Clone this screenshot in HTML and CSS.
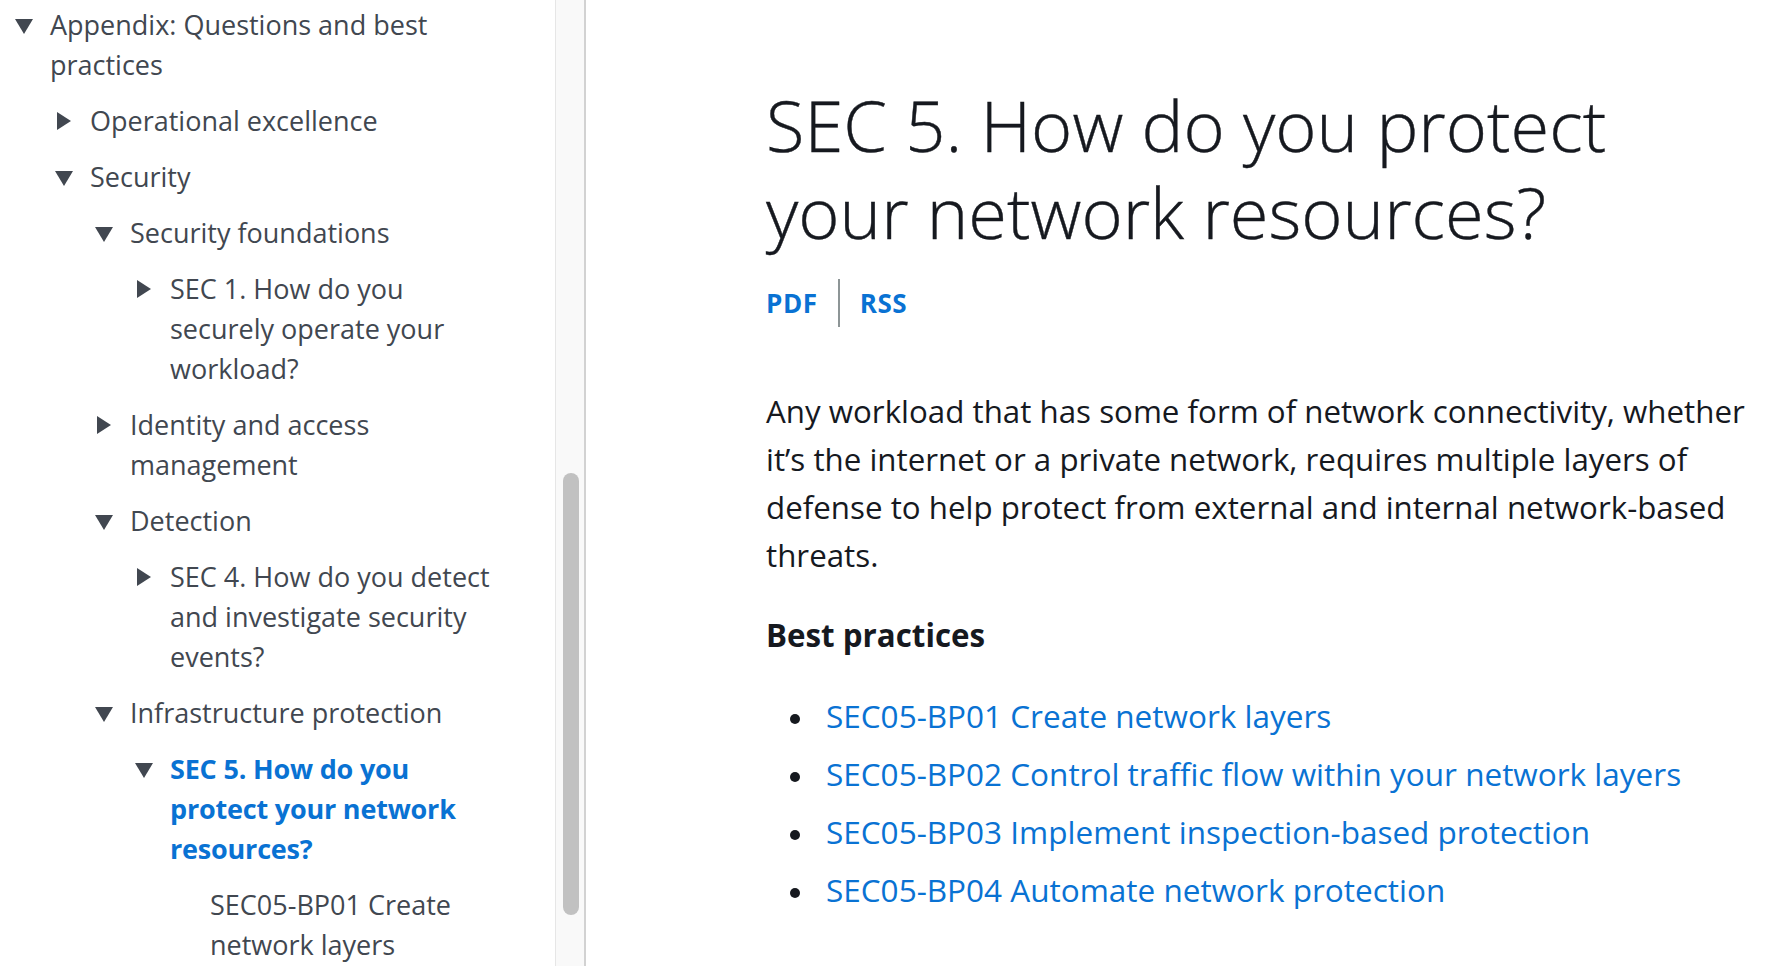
FILE: index.html
```html
<!DOCTYPE html>
<html lang="en">
<head>
<meta charset="utf-8">
<title>SEC 5. How do you protect your network resources?</title>
<link rel="stylesheet" href="styles.css">
</head>
<body>
<div class="layout">
  <nav class="sidebar">
    <div class="nav-scroll">
      <ul class="toc">
        <li class="open">
          <div class="row"><span class="caret down"></span><span class="label">Appendix: Questions and best practices</span></div>
          <ul>
            <li><div class="row"><span class="caret right"></span><span class="label">Operational excellence</span></div></li>
            <li class="open">
              <div class="row"><span class="caret down"></span><span class="label">Security</span></div>
              <ul>
                <li class="open">
                  <div class="row"><span class="caret down"></span><span class="label">Security foundations</span></div>
                  <ul>
                    <li><div class="row"><span class="caret right"></span><span class="label">SEC 1. How do you securely operate your workload?</span></div></li>
                  </ul>
                </li>
                <li><div class="row"><span class="caret right"></span><span class="label">Identity and access management</span></div></li>
                <li class="open">
                  <div class="row"><span class="caret down"></span><span class="label">Detection</span></div>
                  <ul>
                    <li><div class="row"><span class="caret right"></span><span class="label">SEC 4. How do you detect and investigate security events?</span></div></li>
                  </ul>
                </li>
                <li class="open">
                  <div class="row"><span class="caret down"></span><span class="label">Infrastructure protection</span></div>
                  <ul>
                    <li class="open">
                      <div class="row"><span class="caret down"></span><span class="label active">SEC 5. How do you protect your network resources?</span></div>
                      <ul>
                        <li><div class="row"><span class="caret none"></span><span class="label">SEC05-BP01 Create network layers</span></div></li>
                      </ul>
                    </li>
                  </ul>
                </li>
              </ul>
            </li>
          </ul>
        </li>
      </ul>
    </div>
    <div class="scrollbar"><div class="thumb"></div></div>
  </nav>
  <main class="content">
    <h1 class="title">SEC 5. How do you protect your network resources?</h1>
    <div class="doc-links">
      <a class="doc-link" href="#">PDF</a>
      <span class="divider"></span>
      <a class="doc-link" href="#">RSS</a>
    </div>
    <p class="intro">Any workload that has some form of network connectivity, whether it’s the internet or a private network, requires multiple layers of defense to help protect from external and internal network-based threats.</p>
    <h2 class="section-title">Best practices</h2>
    <ul class="bp-list">
      <li><a href="#">SEC05-BP01 Create network layers</a></li>
      <li><a href="#">SEC05-BP02 Control traffic flow within your network layers</a></li>
      <li><a href="#">SEC05-BP03 Implement inspection-based protection</a></li>
      <li><a href="#">SEC05-BP04 Automate network protection</a></li>
    </ul>
  </main>
</div>
</body>
</html>
```

FILE: styles.css
```css
* { box-sizing: border-box; }
html, body { margin: 0; padding: 0; background: #ffffff; }
body {
  font-family: "Open Sans", "Noto Sans", "Liberation Sans", sans-serif;
  color: #16191f;
  height: 966px;
  overflow: hidden;
}
.layout {
  display: flex;
  height: 966px;
}

/* ---------- sidebar ---------- */
.sidebar {
  width: 586px;
  flex: none;
  display: flex;
  height: 966px;
  border-right: 2px solid #d2d2d2;
}
.nav-scroll {
  width: 555px;
  flex: none;
  overflow: hidden;
  padding: 5px 50px 0 15px;
}
.scrollbar {
  flex: 1;
  background: #f9f9f9;
  border-left: 1px solid #e6e6e6;
  padding-top: 473px;
}
.thumb {
  width: 16px;
  height: 442px;
  margin-left: 7px;
  border-radius: 8px;
  background: #c1c1c1;
}
.toc, .toc ul {
  list-style: none;
  margin: 0;
  padding: 0;
}
.toc ul {
  padding-left: 40px;
  margin-top: 16px;
}
.toc li + li { margin-top: 16px; }
.row {
  display: flex;
  align-items: flex-start;
  font-size: 27px;
  line-height: 40px;
  color: #414750;
}
.caret {
  width: 35px;
  height: 40px;
  flex: none;
  position: relative;
}
.caret.down::before {
  content: "";
  position: absolute;
  left: 0;
  top: 14px;
  border-left: 9px solid transparent;
  border-right: 9px solid transparent;
  border-top: 15px solid #414750;
}
.caret.right::before {
  content: "";
  position: absolute;
  left: 2px;
  top: 11px;
  border-top: 9px solid transparent;
  border-bottom: 9px solid transparent;
  border-left: 14px solid #414750;
}
.label { flex: 1; }
.label.active {
  color: #0972d3;
  font-weight: 700;
  letter-spacing: -0.2px;
}

/* ---------- main content ---------- */
.content {
  flex: 1;
  padding: 82px 20px 0 180px;
  min-width: 0;
}
.title {
  margin: 0;
  font-size: 70.4px;
  line-height: 87px;
  font-weight: 300;
  color: #16191f;
  -webkit-text-stroke: 0.4px #16191f;
}
.doc-links {
  display: flex;
  align-items: center;
  height: 48px;
  margin-top: 23px;
}
.doc-link {
  color: #0972d3;
  font-weight: 700;
  font-size: 26px;
  letter-spacing: 0.6px;
  text-decoration: none;
}
.divider {
  width: 2px;
  height: 48px;
  background: #8d9596;
  margin: 0 20px 0 20px;
}
.intro {
  margin: 60px 0 0;
  font-size: 31.3px;
  line-height: 48px;
}
.section-title {
  margin: 32px 0 0;
  font-size: 31.3px;
  line-height: 48px;
  font-weight: 700;
}
.bp-list {
  margin: 33px 0 0;
  padding-left: 60px;
  font-size: 31.5px;
  line-height: 48px;
  list-style: none;
}
.bp-list li {
  position: relative;
  margin-bottom: 10px;
}
.bp-list li::before {
  content: "";
  position: absolute;
  left: -36px;
  top: 22px;
  width: 10px;
  height: 10px;
  border-radius: 50%;
  background: #16191f;
}
.bp-list a {
  color: #0972d3;
  text-decoration: none;
}
```
